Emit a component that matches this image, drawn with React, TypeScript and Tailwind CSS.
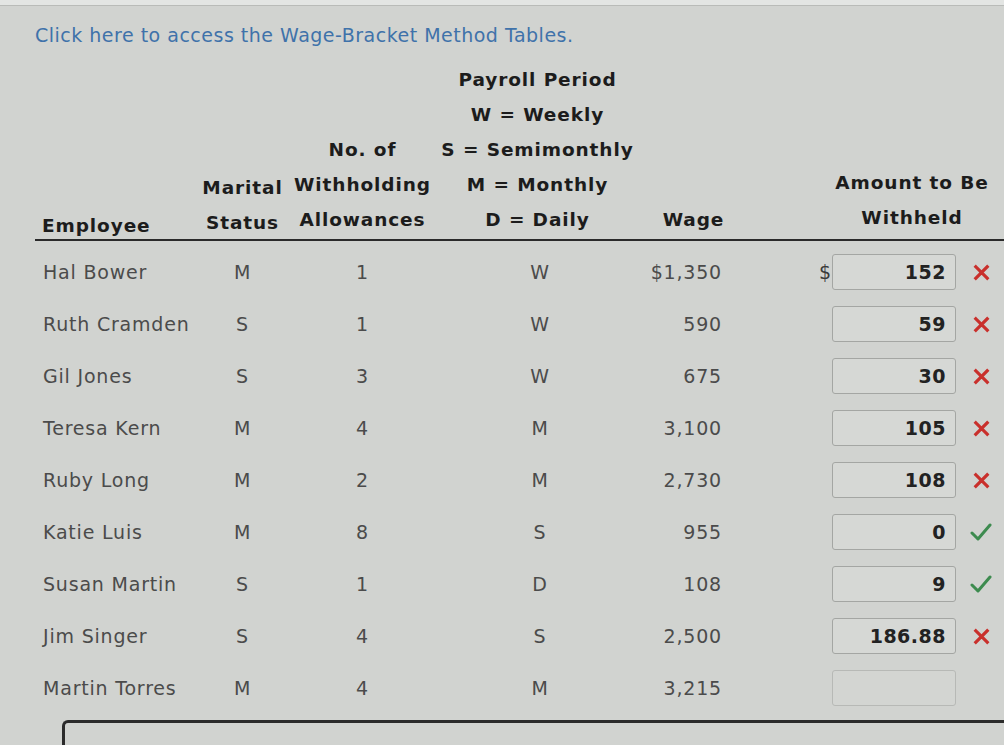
import type { ReactNode } from "react";

type Mark = "x" | "check" | null;

const rows: { name: string; status: string; allow: string; period: string; wage: string; amount: string; mark: Mark }[] = [
  { name: "Hal Bower", status: "M", allow: "1", period: "W", wage: "$1,350", amount: "152", mark: "x" },
  { name: "Ruth Cramden", status: "S", allow: "1", period: "W", wage: "590", amount: "59", mark: "x" },
  { name: "Gil Jones", status: "S", allow: "3", period: "W", wage: "675", amount: "30", mark: "x" },
  { name: "Teresa Kern", status: "M", allow: "4", period: "M", wage: "3,100", amount: "105", mark: "x" },
  { name: "Ruby Long", status: "M", allow: "2", period: "M", wage: "2,730", amount: "108", mark: "x" },
  { name: "Katie Luis", status: "M", allow: "8", period: "S", wage: "955", amount: "0", mark: "check" },
  { name: "Susan Martin", status: "S", allow: "1", period: "D", wage: "108", amount: "9", mark: "check" },
  { name: "Jim Singer", status: "S", allow: "4", period: "S", wage: "2,500", amount: "186.88", mark: "x" },
  { name: "Martin Torres", status: "M", allow: "4", period: "M", wage: "3,215", amount: "", mark: null },
];

const cols = "grid grid-cols-[160px_95px_145px_205px_95px_1fr]";

function WrongMark() {
  return (
    <svg width="17" height="17" viewBox="0 0 18 18" className="text-[#c9302c]">
      <path d="M3 3 L15 15 M15 3 L3 15" stroke="currentColor" strokeWidth="3.4" strokeLinecap="square" />
    </svg>
  );
}

function RightMark() {
  return (
    <svg width="22" height="20" viewBox="0 0 22 20" className="text-[#3d8b4f]">
      <path d="M2 11 L8 17 L20 3" fill="none" stroke="currentColor" strokeWidth="3" strokeLinecap="round" strokeLinejoin="round" />
    </svg>
  );
}

function HeadCell({ children, className = "" }: { children: ReactNode; className?: string }) {
  return <div className={`flex flex-col justify-end text-center ${className}`}>{children}</div>;
}

export default function App() {
  return (
    <div className="w-[1004px] h-[745px] overflow-hidden bg-[#d1d3d0] font-['DejaVu_Sans',sans-serif]">
      <div className="h-[6px] bg-[#e3e5e3] border-b border-[#b9bbb8]" />

      {/* link */}
      <div className="pt-[17px] pl-[35px] leading-[24px] text-[19px] tracking-[0.5px] text-[#3f72aa] whitespace-nowrap">
        Click here to access the Wage-Bracket Method Tables.
      </div>

      {/* header */}
      <div className={`${cols} ml-[35px] mt-[15px] leading-[35px] text-[18.5px] tracking-[0.9px] font-bold text-[#1c1c1c] border-b-2 border-[#2a2a2a] pb-[2px] whitespace-nowrap`}>
        <HeadCell className="text-left pl-[7px] mb-[-6px]">
          <span>Employee</span>
        </HeadCell>
        <HeadCell className="mb-[-3px]">
          <span>Marital</span>
          <span>Status</span>
        </HeadCell>
        <HeadCell>
          <span>No. of</span>
          <span>Withholding</span>
          <span>Allowances</span>
        </HeadCell>
        <HeadCell>
          <span>Payroll Period</span>
          <span>W = Weekly</span>
          <span>S = Semimonthly</span>
          <span>M = Monthly</span>
          <span>D = Daily</span>
        </HeadCell>
        <HeadCell className="pl-[12px]">
          <span>Wage</span>
        </HeadCell>
        <div className="flex flex-col justify-end">
          <div className="ml-[82px] w-[190px] text-center flex flex-col mb-[2px]">
            <span>Amount to Be</span>
            <span>Withheld</span>
          </div>
        </div>
      </div>

      {/* rows */}
      <div className="ml-[35px] pt-[5px]">
        {rows.map((r, i) => (
          <div key={r.name} className={`${cols} h-[52px] items-center text-[19px] tracking-[0.8px] text-[#4b4b4b]`}>
            <div className="pl-[8px] whitespace-nowrap">{r.name}</div>
            <div className="text-center">{r.status}</div>
            <div className="text-center">{r.allow}</div>
            <div className="text-center pl-[5px]">{r.period}</div>
            <div className="text-right pr-[13px]">{r.wage}</div>
            <div className="flex items-center ml-[84px]">
              <span className="w-[13px] text-[#3a3a3a] tracking-normal">{i === 0 ? "$" : ""}</span>
              <div
                className={`w-[124px] h-[36px] rounded-[3px] border flex items-center justify-end pr-[9px] text-[19px] tracking-[0.5px] font-bold text-[#222] ${
                  r.mark ? "border-[#a4a6a3] bg-[#d6d8d5]" : "border-[#b7b9b6] bg-[#d3d5d2]"
                }`}
              >
                {r.amount}
              </div>
              <div className="ml-[14px] w-[22px] flex items-center justify-center">
                {r.mark === "x" && <WrongMark />}
                {r.mark === "check" && <RightMark />}
              </div>
            </div>
          </div>
        ))}
      </div>

      {/* next panel edge */}
      <div className="ml-[62px] mt-[6px] h-[40px] border-t-[3px] border-l-[3px] border-[#2b2b2b] rounded-tl-[6px]" />
    </div>
  );
}
